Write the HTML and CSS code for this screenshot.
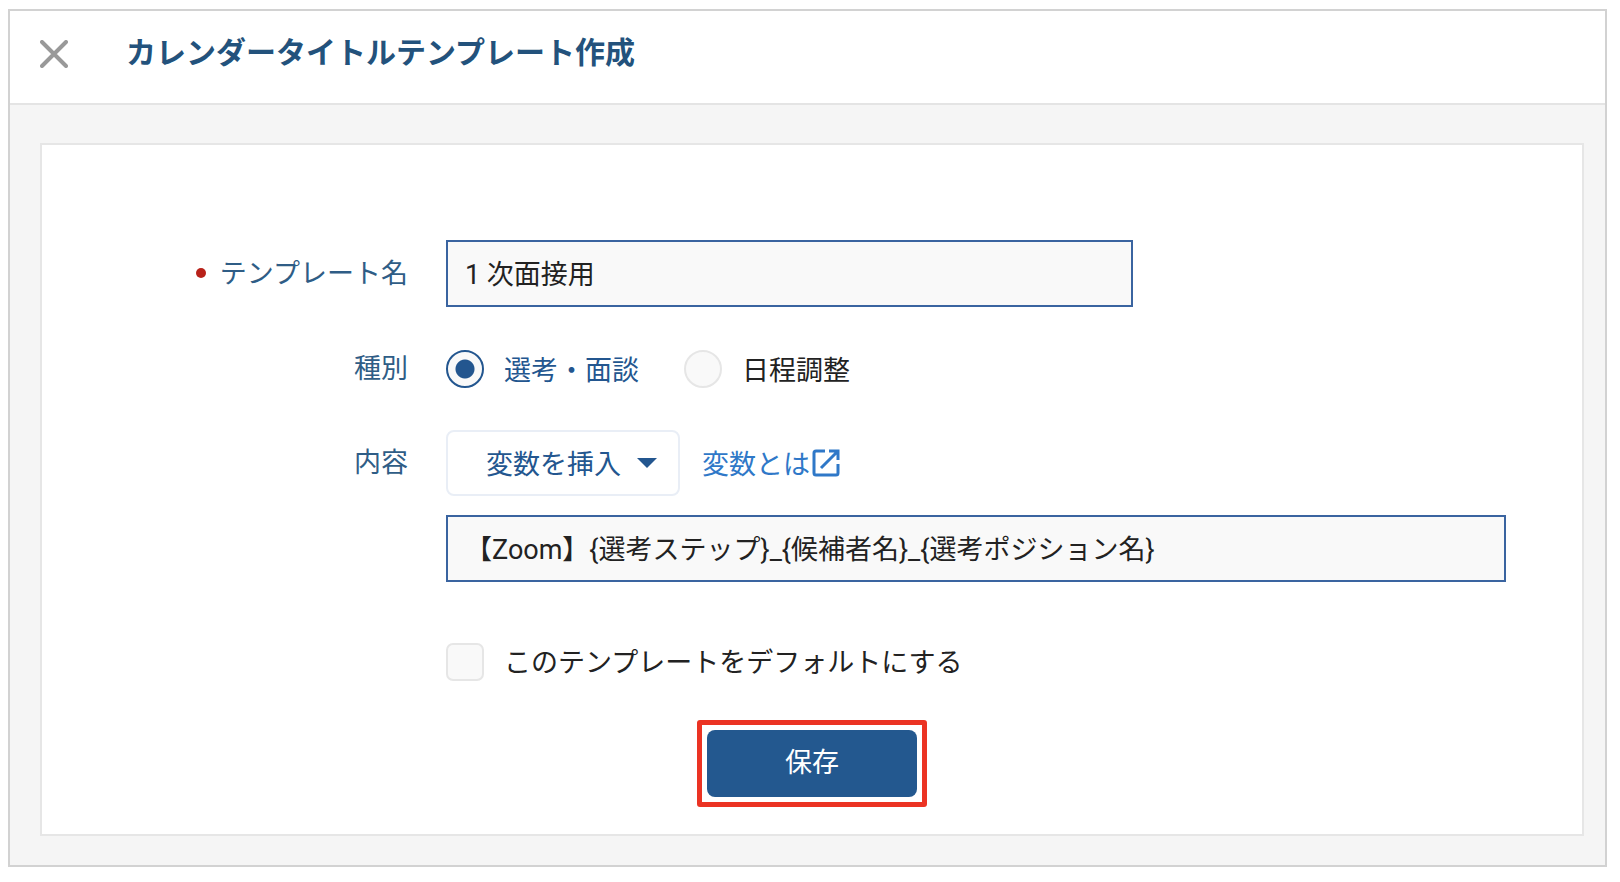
FILE: index.html
```html
<!DOCTYPE html>
<html lang="ja">
<head>
<meta charset="utf-8">
<meta name="viewport" content="width=device-width, initial-scale=1">
<title>カレンダータイトルテンプレート作成</title>
<link rel="stylesheet" href="styles.css">
</head>
<body>
<main class="dialog">
  <header class="dialog-header">
    <button class="close" type="button" aria-label="閉じる">
      <svg class="close-icon" viewBox="0 0 28 28" aria-hidden="true"><path d="M2 2L26 26M26 2L2 26"/></svg>
    </button>
    <h1 class="title">カレンダータイトルテンプレート作成</h1>
  </header>
  <div class="dialog-body">
    <form class="panel">
      <div class="row">
        <label class="label required" for="name">テンプレート名</label>
        <input class="text-input name-input" id="name" type="text" value="1 次面接用">
      </div>
      <div class="row type-row" role="radiogroup" aria-labelledby="type-label">
        <span class="label" id="type-label">種別</span>
        <div class="options">
          <label class="option"><input class="radio" type="radio" name="type" checked><span class="option-text">選考・面談</span></label>
          <label class="option"><input class="radio" type="radio" name="type"><span class="option-text">日程調整</span></label>
        </div>
      </div>
      <div class="row content-row">
        <label class="label content-label" for="content">内容</label>
        <div class="content">
          <div class="tools">
            <button class="insert" type="button">変数を挿入<span class="caret"></span></button>
            <a class="help" href="#">変数とは<svg class="external" viewBox="0 0 28 28" aria-hidden="true"><path d="M13 2H4Q2 2 2 4V24Q2 26 4 26H24Q26 26 26 24V15"/><path d="M17 2H26V11M26 2L9 19"/></svg></a>
          </div>
          <input class="text-input" id="content" type="text" value="【Zoom】{選考ステップ}_{候補者名}_{選考ポジション名}">
          <label class="option default-option"><input class="checkbox" type="checkbox"><span class="option-text">このテンプレートをデフォルトにする</span></label>
        </div>
      </div>
      <div class="actions">
        <div class="highlight"><button class="save" type="submit">保存</button></div>
      </div>
    </form>
  </div>
</main>
</body>
</html>
```
FILE: styles.css
```css
* { box-sizing: border-box; }

body {
  margin: 0;
  padding: 9px 13px 15px 8px;
  background: #fff;
  color: #222;
  font-family: "Noto Sans CJK JP", sans-serif;
  font-size: 27px;
  line-height: 38px;
}

button, input { font: inherit; color: inherit; margin: 0; }

.dialog { border: 2px solid #d2d2d2; }

.dialog-header {
  display: flex;
  align-items: center;
  gap: 58px;
  padding: 18px 30px 30px;
  border-bottom: 2px solid #e4e4e4;
}

.close {
  display: flex;
  padding: 6px 0 0;
  border: 0;
  background: none;
}

.close-icon {
  width: 28px;
  height: 28px;
  fill: none;
  stroke: #999;
  stroke-width: 4;
  stroke-linecap: round;
}

.title {
  margin: 0;
  padding-bottom: 2px;
  color: #23527c;
  font-size: 30px;
  font-weight: 700;
  line-height: 42px;
}

.dialog-body {
  padding: 38px 21px 29px 30px;
  background: #f5f5f5;
}

.panel {
  padding: 95px 76px 27px 40px;
  border: 2px solid #e6e6e6;
  background: #fff;
}

.row {
  display: grid;
  grid-template-columns: 326px minmax(0, 1fr);
  column-gap: 38px;
  align-items: center;
}

.type-row { margin-top: 41px; }

.content-row { margin-top: 41px; align-items: start; }

.label { padding-bottom: 3px; color: #2f5d86; text-align: right; }

.required::before {
  content: "";
  display: inline-block;
  width: 10px;
  height: 10px;
  margin-right: 14px;
  border-radius: 50%;
  background: #b8221a;
  vertical-align: 5px;
}

.content-label { padding-top: 12px; }

.text-input {
  width: 100%;
  height: 67px;
  padding: 0 17px 2px;
  border: 2px solid #3a64a0;
  border-radius: 0;
  background: #f9f9f9;
  font-family: Roboto, "Noto Sans CJK JP", sans-serif;
}

.name-input { max-width: 687px; }

.options { display: flex; gap: 45px; }

.option { display: flex; align-items: center; gap: 20px; }

.radio, .checkbox {
  appearance: none;
  flex: none;
  width: 38px;
  height: 38px;
  border: 2px solid #e6e6e6;
  background: #f9f9f9;
}

.radio { border-radius: 50%; }

.checkbox { border-radius: 7px; }

.radio:checked {
  border-color: #23568f;
  background: radial-gradient(circle, #23568f 9px, #f9f9f9 10px);
}

.radio:checked + .option-text { color: #23568f; }

.content { display: flex; flex-direction: column; }

.tools {
  display: flex;
  align-items: center;
  gap: 22px;
  margin-bottom: 19px;
}

.insert {
  display: flex;
  align-items: center;
  gap: 16px;
  height: 66px;
  padding: 0 21px 0 38px;
  border: 2px solid #e9eef6;
  border-radius: 8px;
  background: #fff;
  color: #23568f;
}

.caret {
  border: 10px solid transparent;
  border-top-color: #23568f;
  border-bottom: 0;
}

.help {
  display: flex;
  align-items: center;
  gap: 2px;
  color: #2f78c8;
  text-decoration: none;
}

.external {
  width: 28px;
  height: 28px;
  fill: none;
  stroke: currentColor;
  stroke-width: 3;
}

.default-option { align-self: flex-start; margin-top: 60px; }

.default-option .option-text { padding-bottom: 2px; }

.actions {
  display: flex;
  justify-content: center;
  margin: 38px -36px 0 0;
}

.highlight {
  padding: 5px;
  border: 5px solid #eb3323;
  border-radius: 3px;
}

.save {
  display: block;
  width: 210px;
  height: 67px;
  padding: 0 0 5px;
  border: 0;
  border-radius: 8px;
  background: #23588f;
  color: #fff;
}
```
